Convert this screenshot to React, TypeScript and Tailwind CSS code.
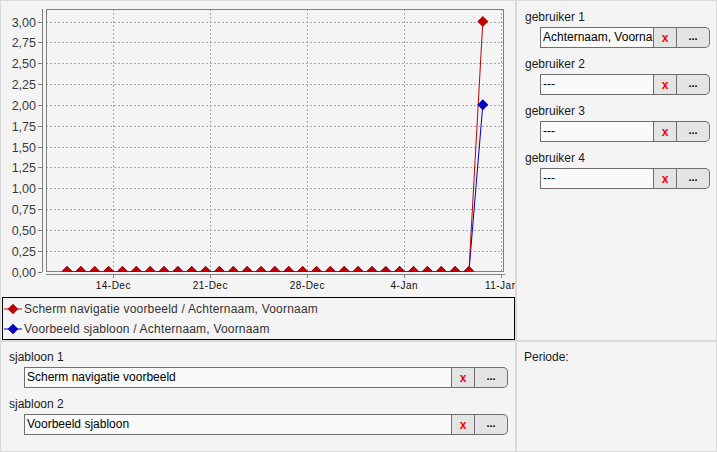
import React from "react";

const FONT = { fontFamily: '"Liberation Sans", Arial, sans-serif' };

// plot geometry (page pixel coordinates)
const PLOT = { left: 46, right: 504, top: 9, bottom: 271.5 };
const PX_PER_UNIT = (PLOT.bottom - PLOT.top) / 3.15;
const yOf = (v: number) => PLOT.bottom - v * PX_PER_UNIT;

const DAY = 13.86;
const X0 = 67;
const POINTS = 31;

const xTicks = [
  { x: 113.3, label: "14-Dec" },
  { x: 210.3, label: "21-Dec" },
  { x: 307.3, label: "28-Dec" },
  { x: 404.3, label: "4-Jan" },
  { x: 501.3, label: "11-Jan" },
];

const yTicks = Array.from({ length: 13 }, (_, i) => i * 0.25);

function seriesValues(last: number) {
  return Array.from({ length: POINTS }, (_, i) => (i === POINTS - 1 ? last : 0));
}

const diamond = (x: number, y: number, r = 5.5) =>
  `M${x},${y - r} L${x + r},${y} L${x},${y + r} L${x - r},${y} Z`;

function Chart() {
  const red = seriesValues(3);
  const blue = seriesValues(2);
  const pts = (vals: number[]) => vals.map((v, i) => [X0 + i * DAY, yOf(v)] as const);
  const redPts = pts(red);
  const bluePts = pts(blue);
  const line = (p: readonly (readonly [number, number])[]) =>
    p.map(([x, y], i) => `${i ? "L" : "M"}${x},${y}`).join(" ");

  return (
    <svg width={514} height={296} viewBox="1 1 514 296" className="block shrink-0" style={FONT}>
      <defs>
        <clipPath id="plotClip">
          <rect x={PLOT.left} y={PLOT.top} width={PLOT.right - PLOT.left} height={PLOT.bottom - PLOT.top} />
        </clipPath>
      </defs>

      {/* grid */}
      {yTicks.slice(1).map((v) => (
        <line
          key={v}
          x1={PLOT.left}
          x2={PLOT.right}
          y1={Math.round(yOf(v)) + 0.5}
          y2={Math.round(yOf(v)) + 0.5}
          stroke="#a9a9a9"
          strokeDasharray="2 2"
        />
      ))}
      {xTicks.map((t) => (
        <line
          key={t.label}
          x1={Math.round(t.x) + 0.5}
          x2={Math.round(t.x) + 0.5}
          y1={PLOT.top}
          y2={PLOT.bottom}
          stroke="#a9a9a9"
          strokeDasharray="2 2"
        />
      ))}

      {/* plot frame */}
      <rect
        x={PLOT.left + 0.5}
        y={PLOT.top + 0.5}
        width={PLOT.right - PLOT.left - 1}
        height={PLOT.bottom - PLOT.top - 0.5}
        fill="none"
        stroke="#808080"
      />

      {/* series */}
      <g clipPath="url(#plotClip)">
        <path d={line(bluePts)} fill="none" stroke="#0000c0" strokeWidth={1} />
        <path d={line(redPts)} fill="none" stroke="#c00000" strokeWidth={1} />
        {bluePts.map(([x, y], i) => (
          <path key={`b${i}`} d={diamond(x, y)} fill="#0000c0" />
        ))}
        {redPts.map(([x, y], i) => (
          <path key={`r${i}`} d={diamond(x, y)} fill="#c00000" />
        ))}
      </g>

      {/* y axis */}
      <line x1={42.5} x2={42.5} y1={PLOT.top} y2={PLOT.bottom + 0.5} stroke="#808080" />
      {yTicks.map((v) => {
        const y = Math.round(yOf(v)) + 0.5;
        return (
          <g key={v}>
            <line x1={38} x2={42} y1={y} y2={y} stroke="#808080" />
            <text x={36} y={y + 4.5} textAnchor="end" fontSize={12.5} fill="#3c3c3c">
              {v.toFixed(2).replace(".", ",")}
            </text>
          </g>
        );
      })}

      {/* x axis */}
      <line x1={PLOT.left} x2={505} y1={274.5} y2={274.5} stroke="#808080" />
      {xTicks.map((t) => (
        <g key={t.label}>
          <line x1={Math.round(t.x) + 0.5} x2={Math.round(t.x) + 0.5} y1={275} y2={278} stroke="#808080" />
          <text x={t.x} y={289} textAnchor="middle" fontSize={10} fill="#111" letterSpacing={0.5}>
            {t.label}
          </text>
        </g>
      ))}
    </svg>
  );
}

function LegendMark({ color }: { color: string }) {
  return (
    <svg width={20} height={12} viewBox="0 0 20 12" className="shrink-0">
      <line x1={1} x2={19} y1={6} y2={6} stroke={color} strokeWidth={1} />
      <path d={diamond(10, 6, 5.3)} fill={color} />
    </svg>
  );
}

function Legend() {
  return (
    <div className="ml-px h-[43px] w-[513px] border border-black pt-px text-[12px] tracking-[0.2px] text-[#333]">
      <div className="flex h-[20px] items-center gap-[1px]">
        <LegendMark color="#c00000" />
        <span>Scherm navigatie voorbeeld / Achternaam, Voornaam</span>
      </div>
      <div className="flex h-[20px] items-center gap-[1px]">
        <LegendMark color="#0000c0" />
        <span>Voorbeeld sjabloon / Achternaam, Voornaam</span>
      </div>
    </div>
  );
}

function Picker({ value, inputWidth }: { value: string; inputWidth: string }) {
  return (
    <div className="flex h-[21px] text-[12px]">
      <div
        className={`${inputWidth} h-[21px] overflow-hidden whitespace-nowrap border border-[#6e6e6e] bg-[#fafafa] pl-[2px] leading-[19px] text-black`}
      >
        {value}
      </div>
      <div className="flex h-[21px] w-[23px] items-center justify-center border-y border-r border-[#6e6e6e] bg-[#e4e4e4] text-[12px] font-bold leading-none text-[#ff0000]">
        x
      </div>
      <div className="flex h-[21px] w-[33px] items-center justify-center rounded-r-[5px] border-y border-r border-[#6e6e6e] bg-[#e4e4e4] pb-[3px] text-[11px] font-bold leading-none text-black">
        ...
      </div>
    </div>
  );
}

function Field({
  label,
  value,
  inputWidth,
}: {
  label: string;
  value: string;
  inputWidth: string;
}) {
  return (
    <div className="pb-[8px]">
      <div className="h-[16px] pl-[8px] leading-[16px] text-[#1a1a1a]">{label}</div>
      <div className="mt-[2px] pl-[23px]">
        <Picker value={value} inputWidth={inputWidth} />
      </div>
    </div>
  );
}

export default function App() {
  return (
    <div
      className="grid h-[452px] w-[717px] grid-cols-[516px_201px] grid-rows-[341px_111px] bg-[#f4f4f4] text-[12px]"
      style={FONT}
    >
      <div className="flex flex-col overflow-hidden border border-[#dadada]">
        <Chart />
        <Legend />
      </div>

      <div className="border border-[#dadada] pt-[8px]">
        <Field label="gebruiker 1" value="Achternaam, Voornaam" inputWidth="w-[114px]" />
        <Field label="gebruiker 2" value="---" inputWidth="w-[114px]" />
        <Field label="gebruiker 3" value="---" inputWidth="w-[114px]" />
        <Field label="gebruiker 4" value="---" inputWidth="w-[114px]" />
      </div>

      <div className="border border-[#dadada] pt-[7px]">
        <Field label="sjabloon 1" value="Scherm navigatie voorbeeld" inputWidth="w-[428px]" />
        <Field label="sjabloon 2" value="Voorbeeld sjabloon" inputWidth="w-[428px]" />
      </div>

      <div className="border border-[#dadada] pt-[7px]">
        <div className="h-[16px] pl-[7px] leading-[16px] text-[#1a1a1a]">Periode:</div>
      </div>
    </div>
  );
}
